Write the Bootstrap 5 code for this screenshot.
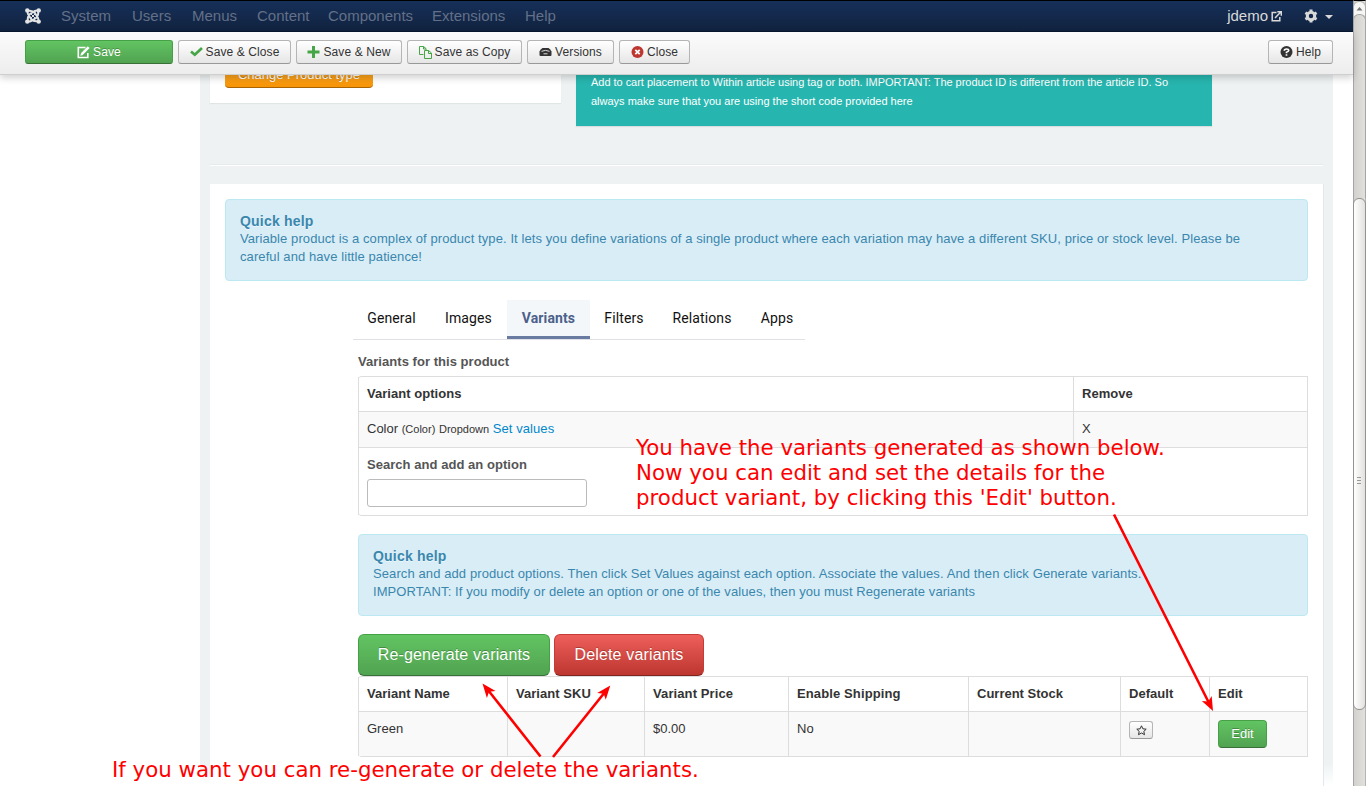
<!DOCTYPE html>
<html lang="en">
<head>
<meta charset="utf-8">
<title>Product variants</title>
<link href="https://cdn.jsdelivr.net/npm/bootstrap@5.3.0/dist/css/bootstrap.min.css" rel="stylesheet">
<style>
body{font:13px/18px "Liberation Sans",Arial,sans-serif;color:#333;background:#fff;overflow:hidden}
.shell{height:786px}
.view{width:1353px}
.topbar{height:32px;border-top:1px solid #000;background:linear-gradient(#17305a,#10223e);border-bottom:1px solid #0a1830;padding:0 20px 0 25px;font-size:15px;line-height:30px}
.topbar .menu span{color:#637087;display:block;white-space:nowrap}
.topbar .right{color:#d9d9d9}
.tools{height:43px;background:linear-gradient(#fbfbfb,#ededed);border-bottom:1px solid #cfcfcf;box-shadow:0 3px 7px rgba(0,0,0,.18);padding:8px 20px 0 25px;position:relative;z-index:2}
.tb{height:24px;border:1px solid #b5b5b5;border-bottom-color:#999;border-radius:3px;background:linear-gradient(#fff,#e6e6e6);font-size:12px;line-height:22px;letter-spacing:.1px;color:#333;padding:0;display:flex;align-items:center;justify-content:center;gap:3px;white-space:nowrap}
.tb svg{flex:none}
.green{background:linear-gradient(#62c462,#51a351);border:1px solid #46a046;border-bottom-color:#387038;color:#fff;text-shadow:0 -1px 0 rgba(0,0,0,.25)}
.red{background:linear-gradient(#ee5f5b,#bd362f);border:1px solid #c43c35;border-bottom-color:#802420;color:#fff;text-shadow:0 -1px 0 rgba(0,0,0,.25)}
.big{height:42px;letter-spacing:.15px}
.page{margin-left:200px;width:1133px;height:711px;background:linear-gradient(#eef2f3 688px,#fff);padding:0 10px}
.upper{height:91px;border-bottom:1px solid #fff;box-shadow:inset 0 -1px #e6eaeb}
.whitebox{width:351px;height:28px;background:#fff;box-shadow:0 1px 1px #dfe4e5;padding-left:15px}
.orange{width:148px;height:13px;background:linear-gradient(#f9a11c,#f89406);border-bottom:1px solid #a96504;border-radius:0 0 4px 4px;color:#fff;line-height:17px}
.orange span{margin-top:-9px;text-shadow:0 -1px 0 rgba(0,0,0,.25)}
.teal{width:636px;height:51px;margin-left:15px;background:#27b6af;color:#fff;font-size:11px;line-height:19px;padding:0 15px;box-shadow:0 1px 1px #d9dedf;white-space:nowrap}
.panelx{margin-top:18px;height:604px;background:#fff;box-shadow:1px 0 #e4e8e9;padding:15px 15px 0}
.qh{background:#d9edf7;border:1px solid #bce8f1;border-radius:4px;height:82px;color:#3a87ad;padding:12px 14px;white-space:nowrap;margin:0;letter-spacing:.085px}
.qh b{display:block;font-size:14px;line-height:18px;letter-spacing:.2px;text-shadow:0 1px 0 rgba(255,255,255,.5)}
.tabsx{margin:19px 0 0 128px;width:452px;height:40px;border-bottom:1px solid #dfe1e6;font:14px/36px Roboto,sans-serif;color:#111;letter-spacing:.12px}
.tabsx span{display:block;height:39px;text-align:center;white-space:nowrap}
.tabsx .on{background:#f3f7fa;border-bottom:3px solid #6a7ba2;color:#4c618a;font-weight:bold;width:83px}
.inner{margin-left:133px;letter-spacing:.04px}
.grid{width:950px;border-collapse:separate;border-spacing:0;table-layout:fixed;border:1px solid #ddd;border-left:0;border-radius:4px 0 0 4px}
.grid td,.grid th{border-left:1px solid #ddd;padding:8px 8px;vertical-align:top;white-space:nowrap;overflow:hidden}
.grid tr+tr td{border-top:1px solid #ddd}
.grid .alt td{background:#f9f9f9}
.note{position:absolute;color:#f00;font:21.33px/25px "DejaVu Sans",sans-serif;white-space:nowrap;z-index:4}
.arrows{position:absolute;left:0;top:0;z-index:4;pointer-events:none}
.sbar{width:13px;border-top:1px solid #000;background:linear-gradient(90deg,#d3d1cd,#e2e0dd);border-left:1px solid #a5a5a5;border-right:1px solid #b5b5b5}
.sbtn{height:19px;margin:0 -1px;border:1px solid #aaa;background:#f6f6f5;border-radius:6px 6px 0 0}
.strack{height:184px;margin:-6px -1px 0;border:1px solid #a5a5a5;border-bottom:0;border-radius:6px 6px 0 0;background:linear-gradient(90deg,#d3d1cd,#e2e0dd)}
.thumb{height:512px;margin:0 -1px;border:1px solid #929292;border-radius:6px;background:linear-gradient(90deg,#fff,#e2e1df);padding-top:277px}
</style>
</head>
<body>
<div class="shell d-flex position-relative overflow-hidden">
<div class="view">
<nav class="topbar d-flex">
<svg width="16" height="30" viewBox="0 0 16 30" fill="none" stroke="#e3e3e3"><g transform="translate(0,7)"><path d="M3 13Q2 9 5 6L10 3Q12 2 14 3M3 3Q7 2 10 5L13 10Q14 12 13 14M13 3Q14 7 11 10L6 13Q4 14 2 13M13 13Q9 14 6 11L3 6Q2 4 3 2" stroke-width="2"/><g fill="#e3e3e3" stroke="none"><circle cx="2.300" cy="2.400" r="2.200"/><circle cx="13.700" cy="2.400" r="2.200"/><circle cx="2.300" cy="13.600" r="2.200"/><circle cx="13.700" cy="13.600" r="2.200"/></g><path d="M5 5l6 6M11 5l-6 6" stroke-width="1"/></g></svg>
<div class="menu d-flex"><span style="margin-left:20px;width:71px">System</span><span style="width:60px">Users</span><span style="width:65px">Menus</span><span style="width:71px">Content</span><span style="width:104px">Components</span><span style="width:93px">Extensions</span><span>Help</span></div>
<div class="right ms-auto d-flex"><span>jdemo</span>
<svg style="margin-left:3px" width="11" height="30" viewBox="0 0 11 30" fill="none" stroke="#d9d9d9" stroke-width="1.500"><path d="M5.500 11.600H1.200v8.200h7.600V16M4 17l5.500-5.700M6.300 10.700h4v4"/></svg>
<svg style="margin-left:22px" width="14" height="30" viewBox="0 0 14 30"><g fill="none" stroke="#d9d9d9"><circle cx="7" cy="15" r="3.700" stroke-width="3"/><path d="M7 8.500v2M7 19.500v2M1.400 11.800l1.700 1M10.900 17.200l1.700 1M1.400 18.200l1.700-1M10.900 12.800l1.700-1" stroke-width="3"/></g></svg>
<svg style="margin-left:7px" width="8" height="30" viewBox="0 0 8 30"><path d="M0 14h8l-4 4z" fill="#d9d9d9"/></svg></div>
</nav>
<div class="tools d-flex">
<button class="tb green" style="width:148px"><svg width="13" height="13" viewBox="0 0 13 13" fill="none" stroke="#fff" stroke-width="1.600"><path d="M8.500 1.500H1.300v10h9.500V7"/><path d="M4.800 8.200L11.700 1.200" stroke-width="2.600"/><path d="M3.300 9.800l.8-2.800 2 2z" fill="#fff" stroke="none"/></svg>Save</button>
<button class="tb" style="width:113px;margin-left:5px"><svg width="13" height="12" viewBox="0 0 13 12"><path d="M1 5.500l3.800 3.300L12 2" fill="none" stroke="#46a546" stroke-width="2.700"/></svg>Save &amp; Close</button>
<button class="tb" style="width:106px;margin-left:5px"><svg width="13" height="12" viewBox="0 0 13 12"><path d="M6.500 0v12M.5 6h12" stroke="#46a546" stroke-width="3"/></svg>Save &amp; New</button>
<button class="tb" style="width:115px;margin-left:5px"><svg width="13" height="13" viewBox="0 0 13 13" fill="none" stroke="#46a546"><path d="M4.500 8.500h-4v-8h4l2.500 2v1.500M4.500 .5v2.500H7M5.500 4.500h4l3 2.500v5.500h-7zM9.500 4.500v3h3"/></svg>Save as Copy</button>
<button class="tb" style="width:87px;margin-left:5px"><svg width="13" height="12" viewBox="0 0 13 12"><path d="M3.500 2h6Q11.500 3 12.500 5.500V9q0 1-1 1h-10q-1 0-1-1V5.500Q1.500 3 3.500 2z" fill="#333"/><path d="M2.500 5.300Q6.500 3.500 10.500 5.300M4.500 7.800h4" stroke="#ddd" fill="none"/></svg>Versions</button>
<button class="tb" style="width:71px;margin-left:5px"><svg width="13" height="12" viewBox="0 0 13 12"><circle cx="6.500" cy="6" r="6" fill="#bd362f"/><path d="M4.300 3.800l4.400 4.400M8.700 3.800l-4.400 4.400" stroke="#fff" stroke-width="1.800"/></svg>Close</button>
<button class="tb ms-auto" style="width:65px"><svg width="13" height="12" viewBox="0 0 13 12"><circle cx="6.500" cy="6" r="6" fill="#333"/><path d="M4.300 4.700Q4.300 3 6.500 3t2.200 1.600Q8.700 5.500 6.500 6.300V7.300M6.500 8.200v1.600" fill="none" stroke="#fff" stroke-width="1.700"/></svg>Help</button>
</div>
<main class="page">
<div class="upper d-flex align-items-start"><div class="whitebox"><div class="orange d-flex justify-content-center align-items-start"><span>Change Product type</span></div></div>
<div class="teal"><div style="margin-top:-2px;letter-spacing:-.03px">Add to cart placement to Within article using tag or both. IMPORTANT: The product ID is different from the article ID. So</div><div>always make sure that you are using the short code provided here</div></div></div>
<section class="panelx">
<div class="qh alert"><b>Quick help</b><span>Variable product is a complex of product type. It lets you define variations of a single product where each variation may have a different SKU, price or stock level. Please be</span><br><span>careful and have little patience!</span></div>
<div class="tabsx d-flex"><span style="margin-left:14px;width:49px">General</span><span style="margin-left:29px;width:47px">Images</span><span class="on" style="margin-left:15px">Variants</span><span style="margin-left:14px;width:40px">Filters</span><span style="margin-left:28px;width:60px">Relations</span><span style="margin-left:28px;width:34px">Apps</span></div>
<div class="inner">
<div class="fw-bold" style="color:#555;height:36px;padding-top:13px">Variants for this product</div>
<table class="grid"><colgroup><col style="width:715px"><col></colgroup>
<tr style="height:34px"><th>Variant options</th><th>Remove</th></tr>
<tr class="alt" style="height:36px"><td style="letter-spacing:0">Color <span style="font-size:11px">(Color)</span>&nbsp;<span style="font-size:11px">Dropdown</span> <span style="color:#08c;letter-spacing:.08px">Set values</span></td><td>X</td></tr>
<tr style="height:68px"><td colspan="2"><b style="color:#555">Search and add an option</b><input class="d-block" style="width:220px;height:28px;margin-top:5px;border:1px solid #bbb;border-radius:3px"></td></tr></table>
<div class="qh alert" style="margin-top:18px"><b>Quick help</b><span style="letter-spacing:.1px">Search and add product options. Then click Set Values against each option. Associate the values. And then click Generate variants.</span><br><span>IMPORTANT: If you modify or delete an option or one of the values, then you must Regenerate variants</span></div>
<div class="d-flex" style="margin-top:18px;gap:4px;font-size:16px"><button class="green big rounded-2" style="width:192px">Re-generate variants</button><button class="red big rounded-2" style="width:150px">Delete variants</button></div>
<table class="grid"><colgroup><col style="width:149px"><col style="width:137px"><col style="width:144px"><col style="width:180px"><col style="width:152px"><col style="width:89px"><col></colgroup>
<tr style="height:34px"><th>Variant Name</th><th>Variant SKU</th><th style="letter-spacing:.1px">Variant Price</th><th style="letter-spacing:.12px">Enable Shipping</th><th style="letter-spacing:0">Current Stock</th><th>Default</th><th>Edit</th></tr>
<tr class="alt" style="height:45px"><td style="letter-spacing:0">Green</td><td></td><td style="letter-spacing:0">$0.00</td><td>No</td><td></td><td><button class="tb" style="width:24px;height:18px;margin-top:1px"><svg width="11" height="11" viewBox="0 0 11 11"><path d="M5.500 .8l1.400 3 3.300.4-2.400 2.200.7 3.300-3-1.700-3 1.700.7-3.300L.8 4.200 4.100 3.800z" fill="none" stroke="#333"/></svg></button></td><td><button class="green rounded-1 p-0" style="width:49px;height:28px">Edit</button></td></tr></table>
</div></section></main>
</div>
<div class="sbar"><div class="sbtn"><svg class="d-block" width="11" height="13"><path d="M2.500 8.500h6L5.500 5z" fill="#777"/></svg></div><div class="strack"></div><div class="thumb"><svg class="d-block mx-auto" width="5" height="9"><path d="M0 1.500h4M0 4.500h4M0 7.500h4" stroke="#999"/></svg></div></div>
<div class="note" style="left:636px;top:435px">You have the variants generated as shown below.<br>Now you can edit and set the details for the<br>product variant, by clicking this 'Edit' button.</div>
<div class="note" style="left:112px;top:757px">If you want you can re-generate or delete the variants.</div>
<svg class="arrows" width="1366" height="786" fill="none" stroke="#f00" stroke-width="2.600"><path d="M1114 514.500L1209 703M540.500 756.500L488 690M553 757L605 692"/><g fill="#f00" stroke="none"><path transform="translate(1213,711) rotate(63.500)" d="M0 0L-14-5.500L-10.500 0L-14 5.500z"/><path transform="translate(482.500,683.500) rotate(231.500)" d="M0 0L-14-5.500L-10.500 0L-14 5.500z"/><path transform="translate(610.300,685.500) rotate(-51)" d="M0 0L-14-5.500L-10.500 0L-14 5.500z"/></g></svg>
</div>
<script src="https://cdn.jsdelivr.net/npm/bootstrap@5.3.0/dist/js/bootstrap.bundle.min.js"></script>
</body>
</html>
